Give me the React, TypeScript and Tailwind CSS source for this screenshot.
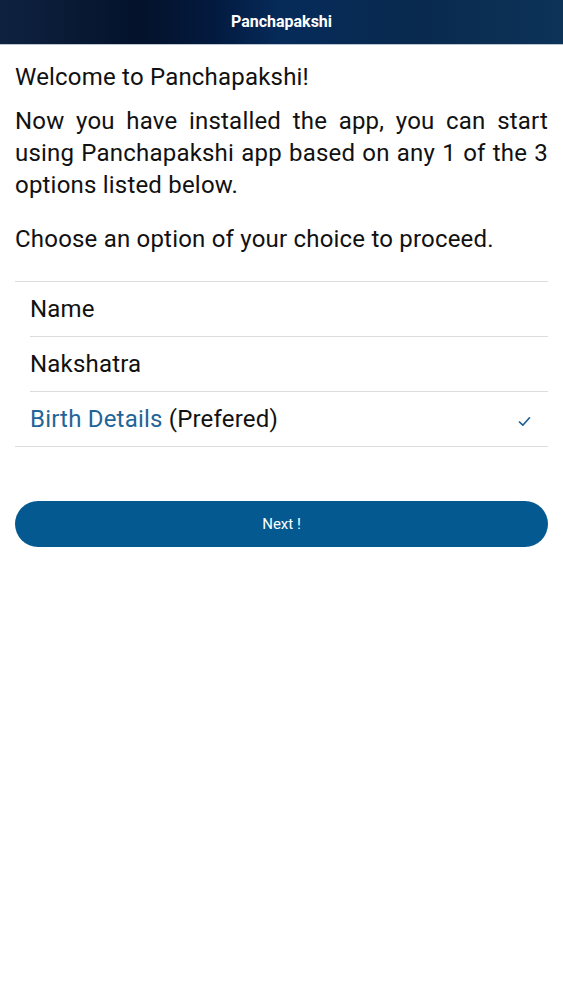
export default function App() {
    return (
        <div className="min-h-screen bg-white" style={{ fontFamily: 'Roboto, "Liberation Sans", sans-serif' }}>
            {/* Header */}
            <header className="h-[45px] flex items-center justify-center bg-[linear-gradient(90deg,#0e2240_0%,#04122b_25%,#031a3f_38%,#062b5a_50%,#092a4e_75%,#0d3358_100%)] border-b border-[#b9c4d2]">
                <h1 className="text-[16px] font-bold text-white">Panchapakshi</h1>
            </header>

            <div className="px-[15px] text-[24px] tracking-[0.2px] text-[#111]">
                <p className="mt-[16px] leading-[32px]">Welcome to Panchapakshi!</p>
                <p className="mt-[12px] leading-[32px] text-justify">
                    Now you have installed the app, you can start using Panchapakshi app based on any 1 of the 3 options listed below.
                </p>
                <p className="mt-[22px] leading-[32px]">Choose an option of your choice to proceed.</p>

                {/* Options */}
                <div className="mt-[26px] border-t border-b border-[#dddddd]">
                    <div className="h-[54px] flex items-center pl-[15px]">Name</div>
                    <div className="ml-[15px] border-t border-[#dddddd] h-[55px] flex items-center">Nakshatra</div>
                    <div className="ml-[15px] border-t border-[#dddddd] h-[55px] flex items-center justify-between pr-[17px]">
                        <span>
                            <span className="text-[#1f6598]">Birth Details</span> (Prefered)
                        </span>
                        <svg width="13" height="11" viewBox="0 0 13 11" className="mt-[4px]">
                            <path d="M1.5 6 L4.8 9.2 L11.5 1.8" fill="none" stroke="#1f5f93" strokeWidth="1.7" strokeLinecap="round" strokeLinejoin="round" />
                        </svg>
                    </div>
                </div>

                <button className="mt-[54px] w-full h-[46px] rounded-full bg-[#045a90] text-white text-[15px] tracking-normal flex items-center justify-center">
                    Next !
                </button>
            </div>
        </div>
    )
}
